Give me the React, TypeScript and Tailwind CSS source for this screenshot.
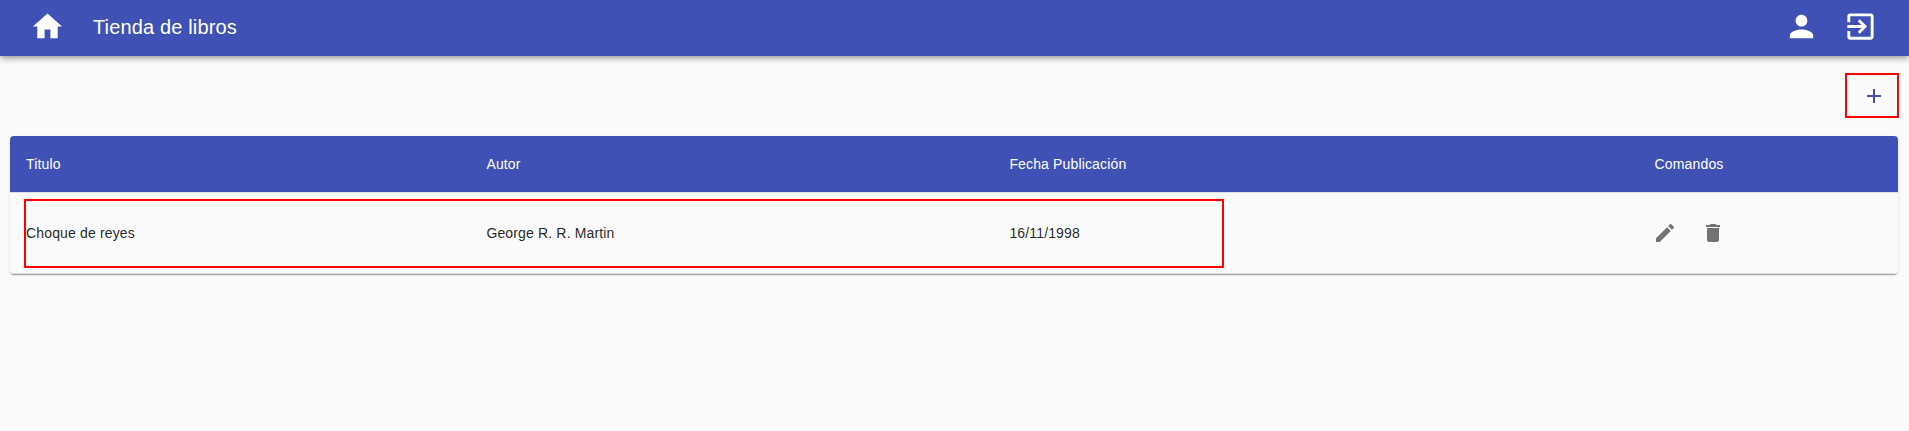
import { MdAdd, MdCreate, MdDelete, MdExitToApp, MdHome, MdPerson } from "react-icons/md";

const books = [{ title: "Choque de reyes", author: "George R. R. Martin", date: "16/11/1998" }];

const columns = "grid grid-cols-[460.4px_523px_645.2px_1fr] items-center pl-4";

export default function App() {
  return (
    <div className="min-h-screen bg-[#fafafa] font-['Liberation_Sans',Arial,sans-serif] text-black/87">
      <header className="relative flex h-14 items-center bg-[#3f51b5] pr-[31px] pb-[3px] pl-[30px] text-white shadow-[0px_2px_4px_-1px_rgba(0,0,0,0.2),0px_4px_5px_0px_rgba(0,0,0,0.14),0px_1px_10px_0px_rgba(0,0,0,0.12)]">
        <button aria-label="Inicio"><MdHome size={35} /></button>
        <h1 className="ml-7 grow text-[20px] leading-8 tracking-[0.0075em]">Tienda de libros</h1>
        <div className="flex gap-6">
          <button aria-label="Perfil"><MdPerson size={35} /></button>
          <button aria-label="Salir"><MdExitToApp size={35} /></button>
        </div>
      </header>
      <main className="px-[10px] pt-[17px]">
        <div className="flex justify-end">
          <button aria-label="Agregar" className="flex h-[45px] w-[54px] items-center border-2 border-[#ff0000] pl-[15px] text-[#3f51b5]">
            <MdAdd size={24} />
          </button>
        </div>
        <section className="mt-[18px] mr-px overflow-hidden rounded text-[14px] tracking-[0.01071em] shadow-[0px_2px_1px_-1px_rgba(0,0,0,0.2),0px_1px_1px_0px_rgba(0,0,0,0.14),0px_1px_3px_0px_rgba(0,0,0,0.12)]">
          <div className={`${columns} h-[57px] border-b border-[#e0e0e0] bg-[#3f51b5] bg-clip-padding leading-6 text-white`}>
            <span>Titulo</span>
            <span>Autor</span>
            <span>Fecha Publicación</span>
            <span>Comandos</span>
          </div>
          {books.map((book) => (
            <div key={book.title} className={`${columns} relative h-[81px] border-b border-[#e0e0e0] leading-5`}>
              <span>{book.title}</span>
              <span>{book.author}</span>
              <span>{book.date}</span>
              <span className="ml-[-1.6px] flex gap-6 text-black/54">
                <button aria-label="Editar"><MdCreate size={24} /></button>
                <button aria-label="Eliminar"><MdDelete size={24} /></button>
              </span>
              <div className="pointer-events-none absolute top-[6px] left-[14px] h-[69px] w-[1200px] border-2 border-[#ff0000]" />
            </div>
          ))}
        </section>
      </main>
    </div>
  );
}
